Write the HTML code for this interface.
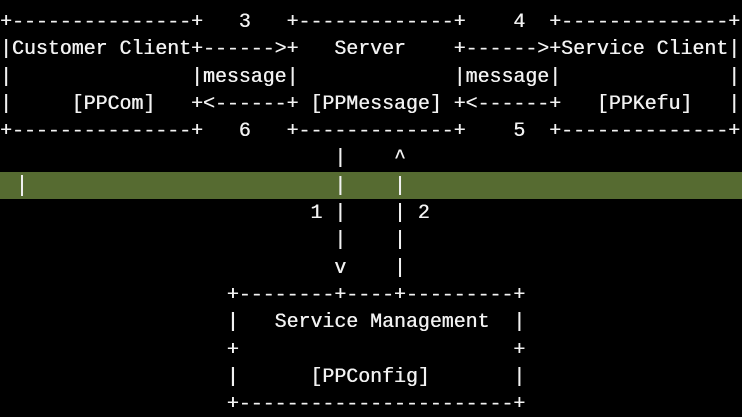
<!DOCTYPE html>
<html><head><meta charset="utf-8"><style>
html,body{margin:0;padding:0;background:#000;width:742px;height:413px;overflow:hidden;}
.hl{position:absolute;left:0;top:172px;width:742px;height:27px;background:#566b31;}
.cur{position:absolute;left:21px;top:175px;width:2px;height:21px;background:#f0f0f0;}
pre{position:absolute;left:0;top:8px;margin:0;font-family:"Liberation Mono",monospace;font-size:19.9px;line-height:27.3px;color:#f2f2f2;white-space:pre;text-shadow:0.4px 0 0 #f2f2f2;}
</style></head><body>
<div class="hl"></div><div class="cur"></div>
<pre>+---------------+   3   +-------------+    4  +--------------+
|Customer Client+------>+   Server    +------>+Service Client|
|               |message|             |message|              |
|     [PPCom]   +&lt;------+ [PPMessage] +&lt;------+   [PPKefu]   |
+---------------+   6   +-------------+    5  +--------------+
                            |    ^
                            |    |
                          1 |    | 2
                            |    |
                            v    |
                   +--------+----+---------+
                   |   Service Management  |
                   +                       +
                   |      [PPConfig]       |
                   +-----------------------+</pre>
</body></html>
